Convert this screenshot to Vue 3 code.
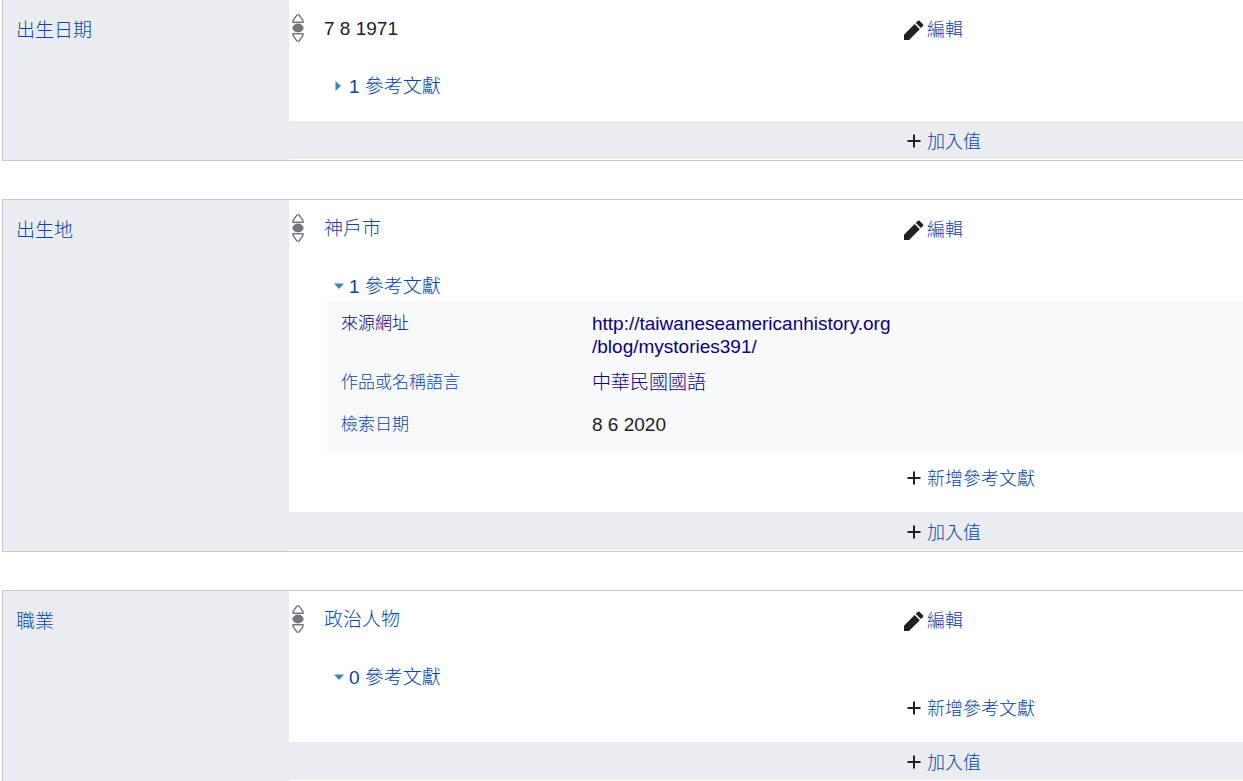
<script setup>
import { ref } from 'vue'

const grupos = ref([
  {
    id: 'P569',
    label: '出生日期',
    value: '7 8 1971',
    link: false,
    refCount: 1,
    open: false,
    snaks: []
  },
  {
    id: 'P19',
    label: '出生地',
    value: '神戶市',
    link: true,
    refCount: 1,
    open: true,
    snaks: [
      { label: '來源網址', seen: true, parts: ['http://taiwaneseamericanhistory.org', '/blog/mystories391/'], link: true },
      { label: '作品或名稱語言', seen: false, parts: ['中華民國國語'], link: true },
      { label: '檢索日期', seen: false, parts: ['8 6 2020'], link: false }
    ]
  },
  {
    id: 'P106',
    label: '職業',
    value: '政治人物',
    link: true,
    refCount: 0,
    open: true,
    snaks: []
  }
])

function toggleRefs(g) {
  g.open = !g.open
}
</script>

<template>
  <main class="wb-page">
    <section v-for="g in grupos" :key="g.id" class="wb-group">
      <div class="wb-label">
        <a href="#">{{ g.label }}</a>
      </div>

      <div class="wb-body">
        <div class="wb-statement">
          <div class="wb-main">
            <button class="wb-rank" type="button" aria-label="等級">
              <svg width="12" height="28" viewBox="0 0 12 28">
                <path d="M5 .9h2l4 5.600v1.700H1V6.500z" />
                <ellipse cx="6" cy="14" rx="5.600" ry="4.400" class="full" />
                <path d="M5 27.100h2l4-5.600v-1.700H1v1.700z" />
              </svg>
            </button>
            <div class="wb-value">
              <a v-if="g.link" href="#">{{ g.value }}</a>
              <span v-else>{{ g.value }}</span>
            </div>
            <div class="wb-toolbar">
              <a href="#" class="wb-action">
                <svg width="20" height="20" viewBox="0 0 20 20">
                  <path d="M16.770 8l1.940-2a1 1 0 0 0 0-1.420l-3.290-3.290a1 1 0 0 0-1.420 0L12 3.230zM1 14.250V19h4.750l9.960-9.960-4.750-4.750z" transform="translate(-1.200 -.600) scale(1.080)" />
                </svg>
                <span>編輯</span>
              </a>
            </div>
          </div>

          <div class="wb-refs">
            <button class="wb-toggle" type="button" :aria-expanded="g.open" @click="toggleRefs(g)">
              <svg width="12" height="12" viewBox="0 0 12 12">
                <path v-if="g.open" d="M1 3.500h10L6 9z" />
                <path v-else d="M2.500 1v10l5.500-5z" />
              </svg>
              <span>{{ g.refCount }} 參考文獻</span>
            </button>

            <template v-if="g.open">
              <dl v-if="g.snaks.length" class="wb-snaks">
                <div v-for="s in g.snaks" :key="s.label" class="wb-snak">
                  <dt><a href="#" :class="{ seen: s.seen }">{{ s.label }}</a></dt>
                  <dd>
                    <a v-if="s.link" href="#" class="seen"><template v-for="p in s.parts" :key="p">{{ p }}<wbr></template></a>
                    <span v-else>{{ s.parts[0] }}</span>
                  </dd>
                </div>
              </dl>
              <div class="wb-addref">
                <a href="#" class="wb-action">
                  <svg width="20" height="20" viewBox="0 0 20 20">
                    <path d="M9 3.500h2V9h5.500v2H11v5.500H9V11H3.500V9H9z" />
                  </svg>
                  <span>新增參考文獻</span>
                </a>
              </div>
            </template>
          </div>
        </div>

        <div class="wb-add">
          <a href="#" class="wb-action">
            <svg width="20" height="20" viewBox="0 0 20 20">
              <path d="M9 3.500h2V9h5.500v2H11v5.500H9V11H3.500V9H9z" />
            </svg>
            <span>加入值</span>
          </a>
        </div>
      </div>
    </section>
  </main>
</template>

<style>
body { margin: 0; background: #fff; }
</style>

<style scoped>
.wb-page { font-family: 'Liberation Sans', 'Noto Sans CJK TC', sans-serif; font-size: 19px; font-weight: 300; line-height: 23px; color: #202122; padding-left: 2px; }
a { color: #0645ad; text-decoration: none; }
a:hover { text-decoration: underline; }
a.seen { color: #0b0080; }
svg { display: block; flex: none; }

.wb-group { display: flex; border: 1px solid #c8ccd1; border-right: none; margin-bottom: 38px; }
.wb-group:first-child { border-top: none; }
.wb-group:last-child { border-bottom: none; margin-bottom: 0; }
.wb-label { box-sizing: border-box; width: 286px; flex: none; background: #eaecf0; padding: 19px 13px; }
.wb-body { flex: 1; min-width: 0; }

.wb-statement { box-sizing: border-box; min-height: 121px; padding-bottom: 18px; }
.wb-main { display: flex; align-items: center; padding: 14px 0 16px 3px; }
.wb-rank { background: none; border: none; padding: 0; margin-right: 20px; cursor: pointer; }
.wb-rank path { fill: #fff; stroke: #72777d; stroke-width: 1.4; }
.wb-rank .full { fill: #72777d; }
.wb-value { flex: 1; min-width: 0; }
.wb-toolbar { width: 339px; flex: none; padding-top: 3px; }
.wb-action { display: inline-flex; align-items: center; gap: 3px; font-size: 18px; vertical-align: top; }
.wb-action svg { fill: #202122; }
.wb-action span { padding-top: 2px; }

.wb-refs { padding-left: 38px; padding-top: 13px; }
.wb-toggle { display: flex; align-items: center; gap: 4px; height: 30px; padding: 0 0 0 6px; background: none; border: none; font: inherit; color: #0645ad; cursor: pointer; }
.wb-toggle path { fill: #3f86bd; }
.wb-snaks { margin: 0 0 10px; padding-bottom: 8px; background: #f8f9fa; }
.wb-snak { display: flex; box-sizing: border-box; min-height: 42px; padding: 11px 14px 2px; }
.wb-snak dt { width: 251px; flex: none; font-size: 17px; }
.wb-snak dd { margin: 0; width: 304px; }
.wb-addref { display: flex; align-items: center; height: 32px; margin-left: auto; width: 339px; }

.wb-add { display: flex; align-items: center; box-sizing: border-box; height: 38px; padding-top: 2px; padding-left: calc(100% - 339px); background: #eaecf0; margin-bottom: 1px; }
</style>
